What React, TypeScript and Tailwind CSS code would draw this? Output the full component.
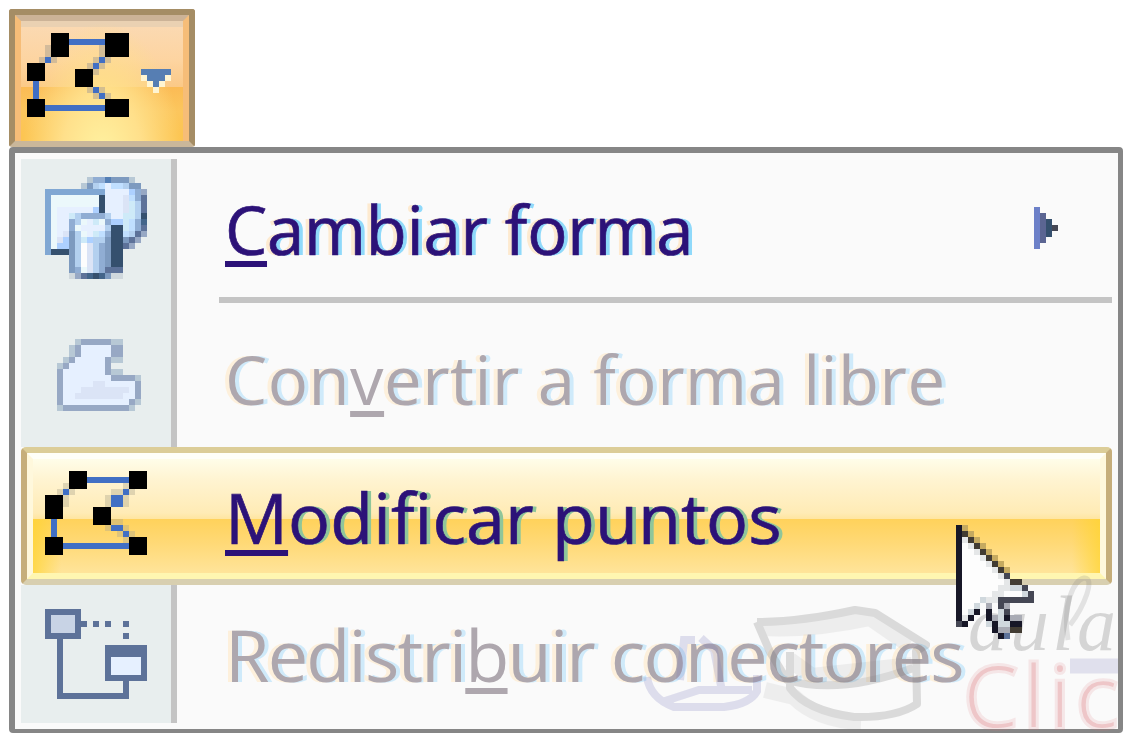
import { clsx } from 'clsx';
import type { ReactNode } from 'react';

type Rect = [x: number, y: number, w: number, h: number];

const palette: Record<string, string> = {
  a: '#b7c8d5',
  b: '#7d9abf',
  c: '#b3d0ef',
  d: '#35506e',
  e: '#e6f0ff',
  f: '#ebf8fb',
  g: '#80a7d3',
  h: '#add0ff',
  i: '#5d7299',
  j: '#ceeaf8',
  k: '#90add3',
  l: '#97a8c4',
  m: '#dbe4f6',
  n: '#c0dfff',
  o: '#547fb5',
  p: '#43658a',
  q: '#d0d8dd',
  w: '#fdfdfd',
  s: '#e5e7e8',
  G: '#a9abb4',
  K: '#171727',
  t: '#c5aa60',
  x: '#454754',
  z: '#423c33',
};

const shapes = [
  '.......akkobbba..',
  '......abcnenncbb.',
  'ggggggggggeeeehkl',
  'gffffffffdeeemnki',
  'gffffffffdeeemjci',
  'gfeeeeeehdeeemjci',
  'gfeejckkkkceejjcd',
  'gfeekcfejfkhhjnkp',
  'gfeekfeeeecddjnki',
  'gfembcfejnkddncil',
  'gfmhbcjhccbddbil.',
  'gfhhbcwmckbddil..',
  'gdddbcwmckbdd....',
  '....bcwmckbdd....',
  '....bcwmckbdd....',
  '....bkfmckiii....',
  '....qlipdpbqq....',
];

const freeform = [
  '...alllllaa...',
  '..aleeeeell...',
  '..aleeeeell...',
  '.aleeeeelaa...',
  'aleeeeeel.....',
  'leeeeeeelaa...',
  'leeeeeeeelllla',
  'leeeeemmeeeeel',
  'leeemmmmmmmmel',
  'leemmmmmmmmeel',
  'leeeeeeeeeeela',
  'allllllllllla.',
];

const cursor = [
  'Kt...........',
  'Kzt..........',
  'Kszt.........',
  'Kwszt........',
  'Kwwszt.......',
  'Kwwwszt......',
  'Kwwwwszt.....',
  'Kwwwwwszt....',
  'Kwwwwwwsx....',
  'Kwwwwwwwszz..',
  'Kwwwwwwssqqx.',
  'Kwwwwwsswwwqx',
  'Kwwwqssxxxxxx',
  'Kwwq.G.xG....',
  'KwqK.K.qx....',
  'KsK..KGqKGG..',
  'xK...qKqqKK..',
  '......KGGzz..',
  '.......Ki....',
];

function Sprite({ rows, className }: { rows: string[]; className?: string }) {
  return (
    <svg
      width={rows[0].length * 6}
      height={rows.length * 6}
      viewBox={`0 0 ${rows[0].length} ${rows.length}`}
      shapeRendering="crispEdges"
      className={className}
    >
      {rows.flatMap((row, y) =>
        [...row].map((cell, x) =>
          cell === '.' ? null : (
            <rect key={`${x}-${y}`} x={x} y={y} width={1} height={1} fill={palette[cell]} />
          )
        )
      )}
    </svg>
  );
}

function Rects({ items, fill, opacity }: { items: Rect[]; fill: string; opacity?: number }) {
  return (
    <g fill={fill} opacity={opacity}>
      {items.map(([x, y, width, height]) => (
        <rect key={`${x}-${y}`} x={x} y={y} width={width} height={height} />
      ))}
    </g>
  );
}

function EditPointsButtonIcon() {
  return (
    <svg width="144" height="84" viewBox="27 33 144 84" shapeRendering="crispEdges">
      <Rects
        fill="#b8aa94"
        opacity={0.6}
        items={[[45, 45, 6, 12], [39, 57, 6, 6], [51, 57, 6, 6], [99, 45, 6, 12], [93, 57, 6, 6], [105, 57, 6, 6], [87, 63, 6, 6], [93, 69, 6, 6], [99, 63, 6, 6], [87, 87, 6, 6], [99, 87, 6, 6], [93, 93, 6, 6], [105, 93, 6, 6]]}
      />
      <Rects
        fill="#416fc4"
        items={[[69, 39, 36, 6], [33, 81, 6, 18], [45, 105, 60, 6], [45, 57, 6, 6], [99, 57, 6, 6], [93, 63, 6, 6], [93, 87, 6, 6], [99, 93, 6, 6]]}
      />
      <Rects
        fill="#000"
        items={[[51, 33, 18, 24], [105, 33, 24, 24], [27, 63, 18, 18], [75, 69, 18, 18], [27, 99, 18, 18], [105, 99, 24, 18]]}
      />
      <Rects
        fill="#fff5d2"
        items={[[141, 75, 6, 6], [165, 75, 6, 6], [147, 81, 6, 6], [159, 81, 6, 6], [153, 87, 6, 6]]}
      />
      <Rects fill="#567eb3" items={[[141, 69, 30, 6], [147, 75, 18, 6], [153, 81, 6, 6]]} />
    </svg>
  );
}

function EditPointsIcon() {
  return (
    <svg width="102" height="84" viewBox="45 471 102 84" shapeRendering="crispEdges">
      <Rects
        fill="#b0aa90"
        opacity={0.4}
        items={[[63, 483, 6, 6], [57, 489, 6, 6], [69, 489, 6, 6], [63, 495, 6, 12], [123, 483, 6, 6], [111, 489, 12, 6], [129, 489, 6, 6], [105, 495, 6, 12], [123, 495, 6, 12], [111, 519, 12, 6], [105, 525, 6, 6], [123, 525, 6, 6], [117, 531, 6, 6], [129, 531, 6, 6], [123, 537, 6, 6]]}
      />
      <Rects
        fill="#416fc4"
        items={[[87, 477, 42, 6], [51, 519, 6, 18], [63, 543, 66, 6], [63, 489, 6, 6], [123, 489, 6, 6], [111, 495, 12, 12], [111, 525, 12, 6], [123, 531, 6, 6]]}
      />
      <Rects
        fill="#000"
        items={[[69, 471, 18, 18], [129, 471, 18, 18], [45, 495, 18, 24], [93, 507, 18, 18], [45, 537, 18, 18], [129, 537, 18, 18]]}
      />
    </svg>
  );
}

function ConnectorsIcon() {
  return (
    <svg width="102" height="90" viewBox="45 609 102 90" shapeRendering="crispEdges">
      <Rects
        fill="#5d7299"
        items={[[45, 609, 36, 30], [81, 621, 6, 6], [93, 621, 6, 6], [105, 621, 6, 6], [123, 621, 6, 6], [123, 633, 6, 6], [105, 645, 42, 36], [57, 639, 6, 60], [63, 693, 66, 6], [123, 681, 6, 12]]}
      />
      <Rects fill="#c8d3e5" items={[[51, 615, 24, 18]]} />
      <Rects fill="#e6f0ff" items={[[111, 657, 30, 18]]} />
    </svg>
  );
}

function SubmenuArrow() {
  return (
    <svg width="24" height="42" viewBox="0 0 24 42" shapeRendering="crispEdges">
      <rect width="6" height="42" fill="#6c80c8" />
      <rect x="6" y="6" width="6" height="30" fill="#5b6592" />
      <rect x="12" y="12" width="6" height="18" fill="#35506e" />
      <rect x="18" y="18" width="6" height="6" fill="#454754" />
    </svg>
  );
}

function Key({ children }: { children: ReactNode }) {
  return (
    <span className="underline decoration-[6px] underline-offset-[6px] [text-decoration-skip-ink:none] [text-shadow:none]">
      {children}
    </span>
  );
}

function Label({ disabled, className, children }: { disabled?: boolean; className?: string; children: ReactNode }) {
  return (
    <span
      className={clsx(
        'block whitespace-nowrap leading-[90px]',
        disabled
          ? 'text-[#aea7ae] [text-shadow:-4px_0_#fdf0dc,4px_0_#cfeafa]'
          : 'text-[#2c1278] [-webkit-text-stroke:0.7px_#2c1278]',
        className
      )}
    >
      {children}
    </span>
  );
}

function Gutter({ className, children }: { className?: string; children: ReactNode }) {
  return (
    <div className={clsx('w-[156px] shrink-0 border-r-[6px] border-[#c4c4c4] bg-[#e8eeee] pl-6', className)}>
      {children}
    </div>
  );
}

function Watermark() {
  return (
    <div className="pointer-events-none absolute left-[624px] top-[420px] h-[160px] w-[479px] overflow-hidden">
      <svg width="479" height="160" viewBox="639 573 479 160" fill="none">
        <g stroke="#777" opacity="0.24" strokeLinejoin="round">
          <path strokeWidth="8" d="M757 622 Q800 622 855 610 L875 613 L926 645 L916 651 L917 704 Q896 718 854 717 Q807 711 790 688 L790 652 M757 622 L770 652 L787 680 Q840 695 913 668" />
          <path strokeWidth="16" opacity="0.4" d="M761 628 Q810 631 870 618 L909 645 M765 690 L794 697 Q817 720 861 722 M790 660 L812 676 L912 665" />
        </g>
        <g stroke="#7777bb" opacity="0.22">
          <path strokeWidth="8" d="M647 677 Q650 698 674 707 L724 707 Q750 704 757 691 L757 675 M665 701 L699 690 L752 690 M680 680 L684 640 L695 640 M722 691 L714 650 L701 638" />
        </g>
        <text x="968" y="650" className="font-['Liberation_Serif'] italic" fontSize="78" textLength="148" fill="#777" fillOpacity="0.28">
          aula
        </text>
        <path d="M1068 640 C1062 604 1074 580 1084 578 C1096 577 1084 607 1070 625" stroke="#777" strokeOpacity="0.18" strokeWidth="5" />
        <path d="M1070 666 H1118" stroke="#7777bb" strokeOpacity="0.2" strokeWidth="15" />
        <text x="964" y="727" className="font-['Open_Sans'] font-light" fontSize="85" textLength="153" fill="#dc7478" fillOpacity="0.28" stroke="#dc7478" strokeOpacity="0.14" strokeWidth="6">
          Clic
        </text>
      </svg>
    </div>
  );
}

function App() {
  return (
    <div className="h-[744px] w-[1133px] overflow-hidden bg-white pl-[9px] pt-[9px] font-['Open_Sans','Noto_Sans',sans-serif]">
      {/* Split button */}
      <button className="block h-[138px] w-[186px] rounded-[3px] border-6 border-[#a58d65] border-b-[#cab79a] bg-[#fffeec]">
        <div className="h-full border-x-6 border-t-6 border-x-[#f6bd78] border-t-[#ccb397] bg-[radial-gradient(ellipse_at_50%_115%,#fff3a2_0%,#ffe08b_35%,transparent_70%),linear-gradient(#ead1b2_0,#ead1b2_6px,#fbd9b1_6px,#fdd4a0_40px,#fbc987_66px,#fbbb55_66px,#fcc65d_90px,#fcc552_114px)] pl-[6px] pt-3">
          <EditPointsButtonIcon />
        </div>
      </button>

      {/* Menu */}
      <div className="relative h-[586px] w-[1114px] rounded-[4px] border-b-4 border-l-6 border-r-5 border-t-6 border-[#868686] bg-[#fafafa] p-[6px]">
        <div className="flex h-36">
          <Gutter className="pt-[18px]">
            <Sprite rows={shapes} />
          </Gutter>
          <div className="ml-[42px] flex flex-1 justify-between border-b-6 border-[#c4c4c4] pl-[6px] pr-[54px]">
            <Label className="mt-[25px] text-[67px] tracking-[-0.2px] [text-shadow:-4px_0_#fdead0,4px_0_#8fd9fa]">
              <Key>C</Key>ambiar forma
            </Label>
            <div className="mt-12">
              <SubmenuArrow />
            </div>
          </div>
        </div>

        <div className="flex h-36">
          <Gutter className="pt-9">
            <Sprite rows={freeform} className="ml-3" />
          </Gutter>
          <Label disabled className="ml-12 mt-[31px] text-[67px] tracking-[0.5px]">
            Con<Key>v</Key>ertir a forma libre
          </Label>
        </div>

        {/* Highlighted item */}
        <div className="flex h-[138px] rounded-[5px] border-6 border-x-[#c6ae7b] border-b-[#d8cfb0] border-t-[#dccd98]">
          <div className="flex flex-1 border-6 border-b-[#fff6b1] border-l-[#fff8dc] border-r-[#fff8dc] border-t-[#fffff8] bg-[linear-gradient(#fffde9_0,#fff4d2_20px,#ffebb5_54px,#ffe5a0_60px,transparent_60px),linear-gradient(90deg,#ffd430bb_0,#ffd43000_28px,#ffd43000_calc(100%-28px),#ffd430bb_100%),linear-gradient(#ffd25b_60px,#ffd976_84px,#ffe49a_114px)] pl-3">
            <div className="w-[144px] shrink-0 pt-3">
              <EditPointsIcon />
            </div>
            <Label className="ml-9 mt-[13px] text-[70px] tracking-[0.1px] [text-shadow:4px_0_#8fc69a]">
              <Key>M</Key>odificar puntos
            </Label>
          </div>
        </div>

        <div className="flex h-[138px]">
          <Gutter className="pt-6">
            <ConnectorsIcon />
          </Gutter>
          <Label disabled className="ml-12 mt-[24px] text-[72px] tracking-[-1.8px]">
            Redistri<Key>b</Key>uir conectores
          </Label>
        </div>

        <Watermark />
        <Sprite rows={cursor} className="absolute left-[941px] top-[372px]" />
      </div>
    </div>
  );
}

export default App;
